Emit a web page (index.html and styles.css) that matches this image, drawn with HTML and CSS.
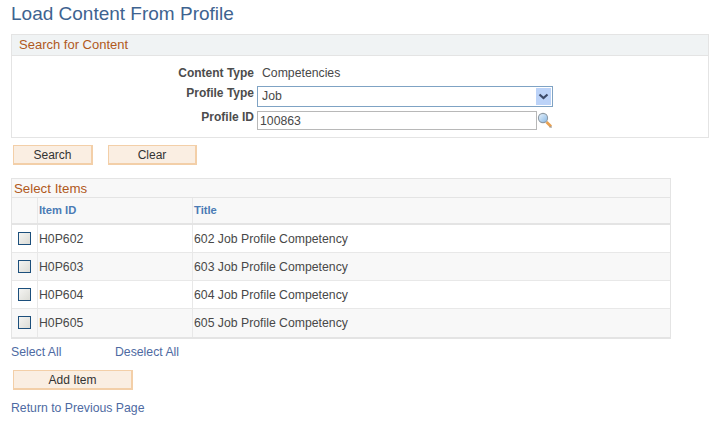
FILE: index.html
```html
<!DOCTYPE html>
<html lang="en">
<head>
<meta charset="utf-8">
<title>Load Content From Profile</title>
<link rel="stylesheet" href="styles.css">
</head>
<body>
<h1 class="page-title">Load Content From Profile</h1>
<section class="search-box">
  <h2 class="box-head">Search for Content</h2>
  <div class="form">
    <div class="form-row row-type"><span class="label">Content Type</span><span class="value">Competencies</span></div>
    <div class="form-row row-profile"><span class="label">Profile Type</span>
      <div class="select"><span>Job</span><span class="select-btn"><svg width="11" height="7" viewBox="0 0 11 7"><path d="M1.5 1.5 5.5 5 9.5 1.5" fill="none" stroke="#3c4a68" stroke-width="2.2"/></svg></span></div>
    </div>
    <div class="form-row row-id"><span class="label">Profile ID</span>
      <div class="input">100863</div>
      <svg class="lookup" width="16" height="16" viewBox="0 0 16 16"><defs><linearGradient id="lens" x1="0" y1="0" x2="1" y2="1"><stop offset="0" stop-color="#eaf3fb"/><stop offset="1" stop-color="#86b8e6"/></linearGradient></defs><path d="M9.5 10 14 14.5" stroke="#e8a050" stroke-width="2.8"/><path d="M12.5 15 15 15" stroke="#8a8a8a" stroke-width="1"/><circle cx="6" cy="6" r="4.6" fill="url(#lens)" stroke="#8e9aa4" stroke-width="1.1"/></svg>
    </div>
  </div>
</section>
<div class="search-actions"><button class="btn btn-search">Search</button><button class="btn btn-clear">Clear</button></div>
<section class="grid">
  <h2 class="grid-title">Select Items</h2>
  <div class="grid-row grid-head"><div class="cell"></div><div class="cell">Item ID</div><div class="cell">Title</div></div>
  <div class="grid-row"><div class="cell cell-check"><span class="check"></span></div><div class="cell">H0P602</div><div class="cell">602 Job Profile Competency</div></div>
  <div class="grid-row alt"><div class="cell cell-check"><span class="check"></span></div><div class="cell">H0P603</div><div class="cell">603 Job Profile Competency</div></div>
  <div class="grid-row"><div class="cell cell-check"><span class="check"></span></div><div class="cell">H0P604</div><div class="cell">604 Job Profile Competency</div></div>
  <div class="grid-row alt last"><div class="cell cell-check"><span class="check"></span></div><div class="cell">H0P605</div><div class="cell">605 Job Profile Competency</div></div>
</section>
<div class="select-links"><a class="link link-all">Select All</a><a class="link">Deselect All</a></div>
<button class="btn btn-add">Add Item</button>
<a class="link link-return">Return to Previous Page</a>
</body>
</html>
```
FILE: styles.css
```css
html, body { margin: 0; padding: 0; background: #fff; }
body { width: 719px; height: 425px; overflow: hidden; font-family: "Liberation Sans", Arial, sans-serif; font-size: 12.25px; color: #484848; }
.page-title { margin: 0; padding: 3px 0 0 11px; height: 34px; box-sizing: border-box; font-size: 19px; line-height: 22px; font-weight: normal; color: #3e6390; }
.search-box { margin-left: 11px; width: 698px; height: 104px; box-sizing: border-box; border: 1px solid #e4e4e4; }
.box-head { margin: 0; height: 20px; padding-left: 7px; background: #f0f3f4; border-bottom: 1px solid #e4e4e4; font-size: 13px; line-height: 19px; font-weight: normal; color: #b0591c; }
.form { display: flex; flex-direction: column; }
.form-row { display: flex; align-items: flex-start; }
.label { width: 242px; box-sizing: border-box; text-align: right; font-size: 12px; font-weight: bold; color: #4c4c4c; line-height: 14px; }
.row-type { height: 30px; padding-top: 10px; box-sizing: border-box; }
.value { margin-left: 8px; line-height: 15px; }
.row-profile { height: 25px; }
.select { margin-left: 3px; width: 296px; height: 21px; box-sizing: border-box; border: 1px solid #7fa3c4; display: flex; justify-content: space-between; padding: 1px; line-height: 17px; }
.select span:first-child { padding-left: 3px; }
.select-btn { width: 15px; height: 17px; background: #bcd3f8; display: flex; align-items: center; justify-content: center; }
.row-id .label { margin-top: -1px; }
.input { margin-left: 3px; width: 280px; height: 19px; box-sizing: border-box; border: 1px solid #b8b8b8; padding-left: 2px; line-height: 18px; }
.lookup { margin-top: 1px; }
.search-actions { display: flex; gap: 15px; padding: 7px 0 0 13px; height: 20px; margin-bottom: 13px; }
.btn { display: block; height: 20px; padding: 0; box-sizing: border-box; background: #faeee2; border: 2px solid #f3cfa8; border-width: 1px 2px 2px 1px; font-family: inherit; font-size: 12px; color: #333; text-align: center; }
.btn-search { width: 80px; }
.btn-clear { width: 89px; }
.grid { margin-left: 11px; width: 660px; box-sizing: border-box; border: 1px solid #e4e4e4; border-bottom-width: 2px; }
.grid-title { margin: 0; height: 18px; padding-left: 2px; background: #f8f8f8; border-bottom: 1px solid #e4e4e4; font-size: 13.3px; line-height: 19px; font-weight: normal; color: #b0591c; }
.grid-row { display: grid; grid-template-columns: 26px 155px 1fr; height: 28px; box-sizing: border-box; border-bottom: 1px solid #e8e8e8; }
.grid-row.last { border-bottom: 0; }
.grid-head { height: 27px; background: #f8f8f8; border-bottom: 2px solid #e4e4e4; font-weight: bold; color: #4a7bb5; font-size: 11.2px; }
.alt { background: #f8f8f8; }
.cell { border-right: 1px solid #e8e8e8; padding: 6px 0 0 1px; line-height: 16px; box-sizing: border-box; }
.cell:last-child { border-right: 0; }
.grid-head .cell { padding-top: 4px; }
.cell-check { padding: 7px 0 0 6px; }
.check { display: block; width: 13px; height: 13px; box-sizing: border-box; border: 1px solid #1c4f7c; background: linear-gradient(135deg, #f4f4f2, #dcdcd6); }
.select-links { display: flex; padding: 5px 0 0 11px; height: 18px; }
.link { color: #4e6aa2; line-height: 16px; }
.link-all { width: 104px; }
.btn-add { margin: 8px 0 0 13px; width: 120px; }
.link-return { display: block; margin: 10px 0 0 11px; }
```
